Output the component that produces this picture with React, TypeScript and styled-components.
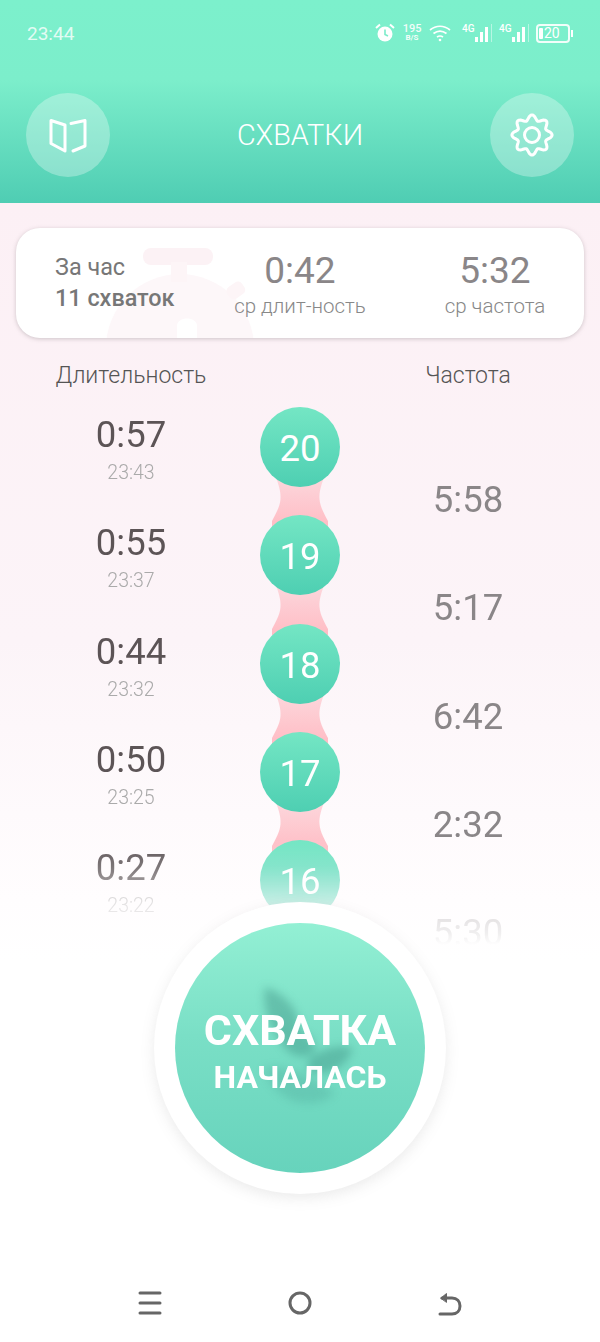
import React from 'react';
import styled, { createGlobalStyle } from 'styled-components';

const rows = [
  { num: 20, duration: '0:57', time: '23:43', freq: '5:58' },
  { num: 19, duration: '0:55', time: '23:37', freq: '5:17' },
  { num: 18, duration: '0:44', time: '23:32', freq: '6:42' },
  { num: 17, duration: '0:50', time: '23:25', freq: '2:32' },
  { num: 16, duration: '0:27', time: '23:22', freq: '5:30' },
];

// wavy eight-lobed gear outline
const gearPath = Array.from({ length: 96 }, (_, i) => {
  const a = (i / 96) * Math.PI * 2;
  const r = 17.5 + 2.6 * Math.cos(8 * (a + Math.PI / 2));
  return `${i ? 'L' : 'M'}${(22 + r * Math.cos(a)).toFixed(2)} ${(22 + r * Math.sin(a)).toFixed(2)}`;
}).join('') + 'Z';

export default function App() {
  return (
    <Page>
      <GlobalStyle />
      <Header>
        <StatusBar>
          <Clock>23:44</Clock>
          <StatusIcons>
            <AlarmIcon />
            <Speed>
              <b>195</b>
              <small>B/S</small>
            </Speed>
            <WifiIcon />
            <Network>
              <NetLabel>4G</NetLabel>
              <SignalIcon />
            </Network>
            <Network>
              <NetLabel>4G</NetLabel>
              <SignalIcon />
            </Network>
            <Battery>
              <BatteryFill />
              20
            </Battery>
          </StatusIcons>
        </StatusBar>
        <Toolbar>
          <RoundButton>
            <BookIcon />
          </RoundButton>
          <Title>СХВАТКИ</Title>
          <RoundButton>
            <GearIcon />
          </RoundButton>
        </Toolbar>
      </Header>

      <SummaryCard>
        <Watermark viewBox="0 0 150 90">
          <circle cx="75" cy="100" r="74" fill="#fdf7f9" />
          <rect x="38" y="0" width="70" height="17" rx="8" fill="#fcf2f5" />
          <rect x="66" y="14" width="16" height="20" fill="#fdf5f7" />
          <rect x="122" y="36" width="18" height="14" rx="5" transform="rotate(-35 130 43)" fill="#fdf5f7" />
          <path d="M72 90V78C72 68 92 68 92 78V90Z" fill="#fff" />
        </Watermark>
        <HourInfo>
          <span>За час</span>
          <strong>11 схваток</strong>
        </HourInfo>
        <Stat>
          <StatValue>0:42</StatValue>
          <StatLabel>ср длит-ность</StatLabel>
        </Stat>
        <Stat>
          <StatValue>5:32</StatValue>
          <StatLabel>ср частота</StatLabel>
        </Stat>
      </SummaryCard>

      <ColumnHeads>
        <ColumnHead>Длительность</ColumnHead>
        <span />
        <ColumnHead>Частота</ColumnHead>
      </ColumnHeads>

      <List>
        {rows.map((row, i) => (
          <Row key={row.num}>
            <DurationCell>
              <Duration>{row.duration}</Duration>
              <TimeLabel>{row.time}</TimeLabel>
            </DurationCell>
            <Middle>
              <Bubble>{row.num}</Bubble>
              {i < rows.length - 1 && <Connector />}
            </Middle>
            <Frequency>{row.freq}</Frequency>
          </Row>
        ))}
      </List>

      <Fab>
        <FabInner>
          <FabIcon viewBox="0 0 110 130">
            <path d="M10 4C30 10 46 28 44 48C52 50 60 56 60 68C50 78 36 74 28 62C16 44 6 24 10 4Z" />
            <path d="M54 76C68 66 84 60 98 66C90 86 72 94 52 88Z" />
            <path d="M8 86C26 80 46 88 80 110C62 128 22 124 8 86Z" opacity="0.5" />
          </FabIcon>
          <FabTitle>СХВАТКА</FabTitle>
          <FabSubtitle>НАЧАЛАСЬ</FabSubtitle>
        </FabInner>
      </Fab>

      <NavBar>
        <MenuIcon />
        <HomeIcon />
        <BackIcon />
      </NavBar>
    </Page>
  );
}

const AlarmIcon = () => (
  <svg width="20" height="20" viewBox="0 0 20 20">
    <circle cx="10" cy="11" r="7.5" fill="#fff" />
    <path d="M10 6.5V11.5L13 13" stroke="#7cecca" strokeWidth="1.6" fill="none" />
    <path d="M1 5L5 1.5M19 5L15 1.5" stroke="#fff" strokeWidth="2" />
  </svg>
);

const WifiIcon = () => (
  <svg width="22" height="18" viewBox="0 0 22 18" fill="none" stroke="#fff" strokeWidth="1.7">
    <path d="M1 6C7 1 15 1 21 6" />
    <path d="M4.5 9.5C8.5 6.5 13.5 6.5 17.5 9.5" />
    <path d="M8 13C9.8 11.8 12.2 11.8 14 13" />
    <circle cx="11" cy="16" r="1.3" fill="#fff" stroke="none" />
  </svg>
);

const SignalIcon = () => (
  <svg width="17" height="20" viewBox="0 0 17 20" fill="#fff">
    <rect x="0" y="14" width="3" height="5" />
    <rect x="5" y="9" width="3" height="10" />
    <rect x="10" y="4" width="3" height="15" />
    <rect x="16" y="1" width="1" height="18" opacity="0.45" />
  </svg>
);

const BookIcon = () => (
  <svg width="38" height="38" viewBox="0 0 38 38" fill="none" stroke="#fff" strokeWidth="3" strokeLinejoin="round" strokeLinecap="round">
    <path d="M2 4.5L16 9V35L2 27.5Z" />
    <path d="M22 7.5L36 4.5V30L24 35" />
  </svg>
);

const GearIcon = () => (
  <svg width="44" height="44" viewBox="0 0 44 44" fill="none" stroke="#fff" strokeWidth="3" strokeLinejoin="round">
    <path d={gearPath} />
    <circle cx="22" cy="22" r="7.5" />
  </svg>
);

const MenuIcon = () => (
  <svg width="24" height="24" viewBox="0 0 24 24" stroke="#666" strokeWidth="3" strokeLinecap="round">
    <path d="M2 2H22M2 12H22M2 22H22" />
  </svg>
);

const HomeIcon = () => (
  <svg width="24" height="24" viewBox="0 0 24 24" fill="none" stroke="#666" strokeWidth="3">
    <circle cx="12" cy="12" r="10" />
  </svg>
);

const BackIcon = () => (
  <svg width="24" height="26" viewBox="0 0 24 26" fill="none" stroke="#666" strokeWidth="3" strokeLinecap="round">
    <path d="M2 24H14C19 24 22 20.5 22 16C22 11.5 19 8 14 8H4" />
    <path d="M3 8L8.5 3.5V12Z" fill="#666" strokeWidth="1" />
  </svg>
);

const Connector = () => (
  <ConnectorShape viewBox="0 0 56 52" preserveAspectRatio="none">
    <defs>
      <linearGradient id="neck" x1="0" y1="0" x2="0" y2="1">
        <stop offset="0" stopColor="#fcd8dd" />
        <stop offset="1" stopColor="#ffbcc4" />
      </linearGradient>
    </defs>
    <path d="M3 0H53C49 10 47 17 47.5 24C48 32 53 40 56 46V52H0V46C3 40 8 32 8.5 24C9 17 7 10 3 0Z" fill="url(#neck)" />
  </ConnectorShape>
);

const GlobalStyle = createGlobalStyle`
  html, body {
    margin: 0;
    padding: 0;
  }
  body {
    font-family: Roboto, "Noto Sans", sans-serif;
  }
  * {
    box-sizing: border-box;
  }
`;

const Page = styled.div`
  position: relative;
  display: flex;
  flex-direction: column;
  width: 600px;
  height: 1342px;
  overflow: hidden;
  background: linear-gradient(#fcf0f5 203px, #fcf4f8 640px, #fffdfe 900px, #ffffff 960px);
`;

const Header = styled.header`
  height: 203px;
  flex-shrink: 0;
  padding: 0 26px;
  background: linear-gradient(#7cf0cc 0, #7ceecb 80px, #4fcdb3 203px);
`;

const StatusBar = styled.div`
  display: flex;
  align-items: center;
  justify-content: space-between;
  height: 66px;
  padding-right: 1px;
`;

const Clock = styled.span`
  font-size: 19px;
  color: rgba(255, 255, 255, 0.8);
  margin-left: 1px;
`;

const StatusIcons = styled.div`
  display: flex;
  align-items: center;
  gap: 8px;
  color: #fff;
`;

const Speed = styled.div`
  display: flex;
  flex-direction: column;
  align-items: center;
  width: 18px;
  line-height: 9px;
  opacity: 0.9;

  b {
    font-size: 11px;
    font-weight: 500;
  }
  small {
    font-size: 8px;
    font-weight: 700;
  }
`;

const Network = styled.div`
  display: flex;
  align-items: flex-start;
  width: 30px;
  margin-left: 3px;

  & + & {
    margin-left: -1px;
  }
`;

const NetLabel = styled.span`
  width: 13px;
  flex-shrink: 0;
  font-size: 10px;
  font-weight: 500;
  line-height: 12px;
`;

const Battery = styled.div`
  position: relative;
  display: flex;
  align-items: center;
  width: 34px;
  height: 19px;
  margin: 0 3px 0 -1px;
  padding-left: 6px;
  border: 2px solid rgba(255, 255, 255, 0.9);
  border-radius: 4px;
  font-size: 14px;
  line-height: 1;

  &::after {
    content: '';
    position: absolute;
    right: -5px;
    top: 4px;
    width: 2px;
    height: 7px;
    background: #fff;
  }
`;

const BatteryFill = styled.span`
  position: absolute;
  left: 1px;
  top: 2px;
  bottom: 2px;
  width: 4px;
  border-radius: 1px;
  background: #fff;
`;

const Toolbar = styled.div`
  display: flex;
  align-items: center;
  justify-content: space-between;
  margin-top: 27px;
`;

const RoundButton = styled.button`
  display: flex;
  align-items: center;
  justify-content: center;
  width: 84px;
  height: 84px;
  padding: 0;
  border: none;
  border-radius: 50%;
  background: rgba(255, 255, 255, 0.3);
`;

const Title = styled.h1`
  margin: 0;
  font-size: 28.8px;
  font-weight: 300;
  color: #fff;
`;

const SummaryCard = styled.section`
  position: relative;
  display: flex;
  align-items: flex-start;
  flex-shrink: 0;
  width: 568px;
  height: 110px;
  margin: 25px 0 0 16px;
  padding: 21px 0 0 39px;
  overflow: hidden;
  background: #fff;
  border-radius: 24px;
  box-shadow: 0 1px 4px rgba(120, 110, 115, 0.35);
`;

const Watermark = styled.svg`
  position: absolute;
  left: 89px;
  top: 20px;
  width: 150px;
  height: 90px;
`;

const HourInfo = styled.div`
  position: relative;
  display: flex;
  flex-shrink: 0;
  flex-direction: column;
  width: 160px;
  padding-top: 3px;
  font-size: 23.4px;
  line-height: 31px;
  color: #777;

  strong {
    font-weight: 500;
  }
`;

const Stat = styled.div`
  position: relative;
  display: flex;
  flex-shrink: 0;
  flex-direction: column;
  align-items: center;
  width: 170px;
  margin: 1px 25px 0 0;
`;

const StatValue = styled.span`
  font-size: 37px;
  line-height: 42px;
  color: #8a8688;
`;

const StatLabel = styled.span`
  font-size: 20.5px;
  line-height: 28px;
  font-weight: 300;
  color: #888;
`;

const ColumnHeads = styled.div`
  display: grid;
  grid-template-columns: 178px 160px 176px;
  flex-shrink: 0;
  padding-left: 42px;
  margin-top: 23px;
`;

const ColumnHead = styled.span`
  font-size: 23px;
  line-height: 30px;
  font-weight: 300;
  text-align: center;
  color: #555;
`;

const List = styled.div`
  flex-shrink: 0;
  height: 538px;
  margin-top: 16px;
  padding-left: 42px;
  mask-image: linear-gradient(
    #000 80.5%,
    rgba(0, 0, 0, 0.8) 85.5%,
    rgba(0, 0, 0, 0.3) 92.6%,
    rgba(0, 0, 0, 0.12) 98%,
    transparent 100%
  );
`;

const Row = styled.div`
  display: grid;
  grid-template-columns: 178px 160px 176px;
  height: 108.33px;
`;

const DurationCell = styled.div`
  display: flex;
  flex-direction: column;
  align-items: center;
  padding-top: 8px;
`;

const Duration = styled.span`
  font-size: 36.5px;
  line-height: 40px;
  color: #5c5456;
`;

const TimeLabel = styled.span`
  margin-top: 7px;
  font-size: 19.5px;
  line-height: 22px;
  font-weight: 300;
  color: #aaa;
`;

const Middle = styled.div`
  display: flex;
  flex-direction: column;
  align-items: center;
`;

const Bubble = styled.div`
  position: relative;
  z-index: 1;
  flex-shrink: 0;
  display: flex;
  align-items: center;
  justify-content: center;
  width: 80px;
  height: 80px;
  padding-top: 3px;
  border-radius: 50%;
  font-size: 36.5px;
  color: #fff;
  background: linear-gradient(#74e6c4, #4ecfb2);
`;

const ConnectorShape = styled.svg`
  flex-shrink: 0;
  width: 56px;
  height: 52px;
  margin: -12px 0;
`;

const Frequency = styled.span`
  padding-top: 73px;
  font-size: 36.5px;
  line-height: 40px;
  text-align: center;
  color: #8a8688;
`;

const Fab = styled.button`
  position: absolute;
  left: 154px;
  top: 902px;
  display: flex;
  align-items: center;
  justify-content: center;
  width: 292px;
  height: 292px;
  padding: 0;
  border: none;
  border-radius: 50%;
  background: #fff;
  box-shadow: 0 4px 14px rgba(130, 130, 130, 0.16);
`;

const FabInner = styled.div`
  position: relative;
  display: flex;
  flex-direction: column;
  align-items: center;
  width: 250px;
  height: 250px;
  padding-top: 80px;
  border-radius: 50%;
  background: linear-gradient(#93f0d4, #7adfc6 45%, #67d3bc);
  color: #fff;
  font-family: Roboto, sans-serif;
  font-weight: 700;
`;

const FabIcon = styled.svg`
  position: absolute;
  left: 80px;
  top: 60px;
  width: 110px;
  height: 130px;
  fill: rgba(50, 130, 120, 0.36);
  filter: blur(4px);
`;

const FabTitle = styled.span`
  position: relative;
  font-size: 43px;
  line-height: 54px;
`;

const FabSubtitle = styled.span`
  position: relative;
  margin-top: 1px;
  font-size: 32px;
  line-height: 38px;
`;

const NavBar = styled.nav`
  display: grid;
  grid-template-columns: repeat(3, 150px);
  justify-items: center;
  align-items: center;
  margin-top: auto;
  padding: 0 75px 26px;
`;
